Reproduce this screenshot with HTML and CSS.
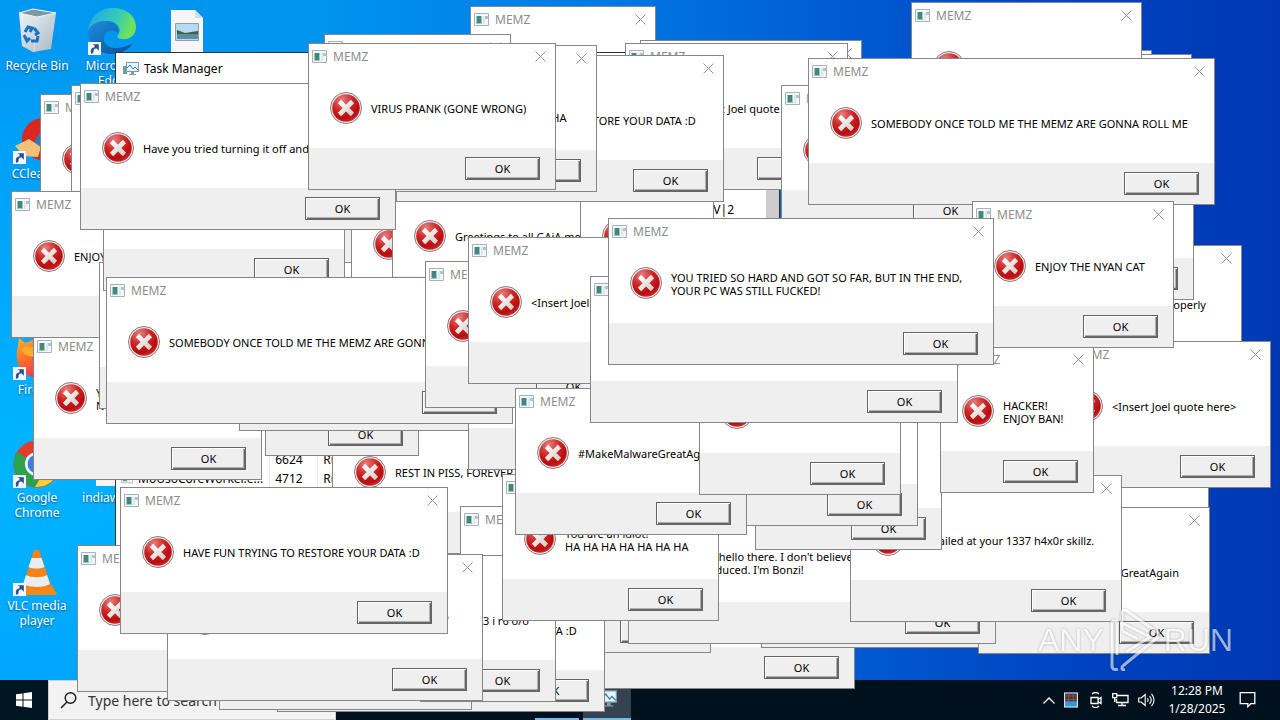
FILE: index.html
```html
<!DOCTYPE html>
<html lang="en">
<head>
<meta charset="utf-8">
<title>Desktop</title>
<link rel="stylesheet" href="styles.css">
</head>
<body>
<svg class="defs" aria-hidden="true">
  <defs>
    <radialGradient id="red" cx=".35" cy=".2" r=".9"><stop offset="0" stop-color="#e58080"/><stop offset=".45" stop-color="#cc2525"/><stop offset=".75" stop-color="#ba0c10"/><stop offset="1" stop-color="#d0383a"/></radialGradient>
    <linearGradient id="cross" x2="1" y2="1"><stop offset="0" stop-color="#fff"/><stop offset="1" stop-color="#d2cec6"/></linearGradient>
    <linearGradient id="bin" x2="1" y2="1"><stop offset="0" stop-color="#f1f7fa"/><stop offset="1" stop-color="#a9b8c0"/></linearGradient>
    <linearGradient id="edge1" x2="1" y2=".3"><stop offset="0" stop-color="#23a4e8"/><stop offset=".6" stop-color="#30c8c0"/><stop offset="1" stop-color="#6ee35a"/></linearGradient>
    <linearGradient id="edge2" x2="1" y2="1"><stop offset="0" stop-color="#1b8fdc"/><stop offset="1" stop-color="#0d4d98"/></linearGradient>
    <linearGradient id="fox" x2=".6" y2="1"><stop offset="0" stop-color="#ffb52b"/><stop offset=".5" stop-color="#ff6a2b"/><stop offset="1" stop-color="#e92a6a"/></linearGradient>
    <symbol id="error" viewBox="0 0 32 32"><circle cx="16" cy="16" r="15.5" fill="#f5eeee" stroke="#8d7676"/><circle cx="16" cy="16" r="13.8" fill="url(#red)"/><path d="M9.500 9.500l13 13M22.500 9.500l-13 13" stroke="url(#cross)" stroke-width="4.600"/></symbol>
    <symbol id="app" viewBox="0 0 15 13"><path d="M.5.5h14v12H.5z" fill="#f4f7f9" stroke="#a6b2ba"/><path d="M2 3h6v8H2z" fill="#9fc5c0"/><path d="M3 3h4v7H3z" fill="#43877c"/><path d="M9 3h2v8H9z" fill="#dfe7ea"/><path d="M11 3h3v3h-3z" fill="#b4c4cc"/></symbol>
    <symbol id="x" viewBox="0 0 12 12"><path d="M.5.5l11 11M11.5.5L.5 11.5" stroke="#8a8a8a" fill="none"/></symbol>
    <symbol id="arrow" viewBox="0 0 12 12"><path d="M0 0h12v12H0z" fill="#f4f6f8"/><path d="M3 11c-1-4 0-6 3-6V3L4 2h6v6L8 6C5 6 5 8 5 10z" fill="#2c4f93"/></symbol>
    <symbol id="taskmgr" viewBox="0 0 16 16"><path d="M0 5h4v8H0z" fill="#6ba58b"/><path d="M3.500 1.500h12v9h-12z" fill="#e5f4fb" stroke="#7d98a8"/><path d="M4 7l3-3 3 4 2-2 3 3" fill="none" stroke="#2882b8"/><path d="M8 11h3v2h2v1H6v-1h2z" fill="#8799a5"/></symbol>
  </defs>
</svg>
<main class="desktop">
  <ul class="icons">
    <li class="shortcut r1 c1"><svg class="glyph" viewBox="0 0 48 48"><path d="M6 5l14-4 23 4-5 36-18 3-11-6z" fill="url(#bin)"/><path d="M6 5l14-4 23 4-19 4z" fill="#7d97a3" stroke="#eef4f6"/><path d="M24 9l-3 35" stroke="#dbe5e9"/><path d="M12 24l3-5 4 1-2 4M21 20l4 5-3 2M11 27l3 6 3-3M18 33h6l1-5" fill="none" stroke="#1573c7" stroke-width="3"/></svg><span>Recycle Bin</span></li>
    <li class="shortcut r1 c2"><svg class="glyph" viewBox="0 0 48 48"><path d="M0 24C1 8 14-1 26 0c13 0 22 9 22 19 0 8-6 13-14 12-4 0-6-2-4-4 5-7-2-14-10-14C10 13 2 18 0 24z" fill="url(#edge1)"/><path d="M0 24c1-7 9-11 18-11 8 0 14 6 12 12-5-6-15-2-14 7 1 7 11 12 28 4C36 50 3 52 0 24z" fill="url(#edge2)"/><use href="#arrow" x="0" y="34" width="13" height="13"/></svg><span>Microsoft Edge</span></li>
    <li class="shortcut r1 c3" aria-label="Picture file"><svg class="glyph" viewBox="0 0 48 48"><path d="M8 2h24l8 8v36H8z" fill="#f6f6f6"/><path d="M32 2v8h8z" fill="#d5dde2"/><path d="M12.500 15.500h23v17h-23z" fill="#b6daf0" stroke="#8ba2b0"/><path d="M14 22l8 3 13-2v3H14z" fill="#35643d"/><path d="M14 26h21v5H14z" fill="#5d8ca5"/></svg></li>
    <li class="shortcut r2 c1"><svg class="glyph" viewBox="0 0 48 48"><circle cx="30" cy="23" r="21" fill="#d9281f"/><path d="M32 8l6 4-10 18-8-2z" fill="#2d7ac0"/><path d="M2 30l14-7 12 8-3 10-14-1z" fill="#f3c178"/><use href="#arrow" x="0" y="35" width="13" height="13"/></svg><span>CCleaner</span></li>
    <li class="shortcut r4 c1"><svg class="glyph" viewBox="0 0 48 48"><path d="M6 6l6 5 8-3c14-5 26 6 26 18S37 46 26 46C10 46 2 32 4 19z" fill="url(#fox)"/><circle cx="29" cy="24" r="10" fill="#6a46dd"/><path d="M8 16c10-4 14 2 18 2-4 2-6 4-6 7-6-1-10-3-12-9z" fill="#ffad2e"/><use href="#arrow" x="0" y="35" width="13" height="13"/></svg><span>Firefox</span></li>
    <li class="shortcut r5 c1"><svg class="glyph" viewBox="0 0 48 48"><circle cx="24" cy="24" r="23.500" fill="#e33b2e"/><path d="M24 24L4 12a23.500 23.500 0 0 0 18 35l10-17z" fill="#2ba24c"/><path d="M24 24l8 6-10 17a23.500 23.500 0 0 0 23-33H24z" fill="#fccf32"/><circle cx="24" cy="24" r="12" fill="#fff"/><circle cx="24" cy="24" r="9.500" fill="#3a7ee8"/><use href="#arrow" x="0" y="35" width="13" height="13"/></svg><span>Google Chrome</span></li>
    <li class="shortcut r5 c2"><svg class="glyph" viewBox="0 0 48 48"><path d="M8 2h32v44H8z" fill="#f4f4f4"/></svg><span>indiaworld</span></li>
    <li class="shortcut r6 c1"><svg class="glyph" viewBox="0 0 48 48"><path d="M10 37h29l5 10H3z" fill="#f58a13"/><path d="M21 2h5l12 36c-6 5-22 5-28 0z" fill="#f3821a"/><path d="M18.500 10h10l3 9c-4 2-12 2-16 0zM13 27c5 3 16 3 21 0l3 9c-6 4-20 4-27 0z" fill="#e9edf0"/><use href="#arrow" x="0" y="35" width="13" height="13"/></svg><span>VLC media player</span></li>
  </ul>
  <div class="layer" id="back"></div>
  <section class="window manager" aria-label="Task Manager">
    <header class="manager-bar"><svg class="manager-icon"><use href="#taskmgr"/></svg>Task Manager</header>
    <div class="manager-tools"><span>|V|2</span></div>
    <table class="processes">
      <tr><td class="name">msedge.exe</td><td class="pid">6624</td><td>Running</td></tr>
      <tr><td class="name"><svg class="process-icon"><use href="#app"/></svg>MoUsoCoreWorker.e...</td><td class="pid">4712</td><td>Running</td></tr>
    </table>
  </section>
  <footer class="taskbar">
    <button class="start" aria-label="Start"><svg viewBox="0 0 16 16"><path d="M0 2.300l6.500-.9v6.200H0zM7.500 1.200L16 0v7.600H7.500zM0 8.500h6.500v6.200L0 13.800zM7.500 8.500H16V16l-8.500-1.200z" fill="#fff"/></svg></button>
    <label class="search"><svg viewBox="0 0 17 17"><circle cx="10.500" cy="6" r="5.300" fill="none" stroke="#1a1a1a" stroke-width="1.400"/><path d="M7 10l-6 6" stroke="#1a1a1a" stroke-width="1.400"/></svg><input type="text" placeholder="Type here to search" aria-label="Type here to search"></label>
    <div class="apps"><button class="app" aria-label="MEMZ"></button><button class="app active" aria-label="Task Manager"><svg viewBox="0 0 16 16"><use href="#taskmgr"/></svg></button></div>
    <div class="tray">
      <svg class="chevron" viewBox="0 0 12 7"><path d="M.5 6.500L6 1l5.500 5.500" fill="none" stroke="#fff" stroke-width="1.300"/></svg>
      <svg class="cell" viewBox="0 0 12 13"><path d="M0 0h12v13H0z" fill="#d7e2e8"/><path d="M1 1h10v7H1z" fill="#4a3338"/><path d="M1 8h10v4H1z" fill="#2e9bdc"/><path d="M1 3h10M1 6h10M4 1v7M8 1v7" stroke="#826a65" stroke-width=".6"/></svg>
      <svg class="meet" viewBox="0 0 12 16"><path d="M1 5.500h7v6H1zM8 7.500l3-2v6l-3-2M2 2c2-2 5-2 7 0M2 14c2 2 5 2 7 0" fill="none" stroke="#fff" stroke-width="1.300"/></svg>
      <svg class="net" viewBox="0 0 17 14"><path d="M5 2.500h11v7H4.500V6M.7.7h4v4h-4zM2.700 5v4M6 12.500h8M10 10v2" fill="none" stroke="#fff" stroke-width="1.300"/></svg>
      <svg class="net" viewBox="0 0 17 14"><path d="M.7 5v4h2.500l4 3.500v-11l-4 3.500zM9.500 5c1 1.500 1 2.500 0 4M11.500 3c2.200 2.500 2.200 5.500 0 8M13.500 1c3.400 3.500 3.400 8.500 0 12" fill="none" stroke="#fff" stroke-width="1.100"/></svg>
      <time class="clock">12:28 PM<br>1/28/2025</time>
      <svg class="note" viewBox="0 0 16 16"><path d="M.7.700h14.600v11h-4l-3 3v-3H.7z" fill="none" stroke="#fff" stroke-width="1.300"/></svg>
    </div>
  </footer>
  <div class="layer" id="front"></div>
  <div class="watermark"><span>ANY</span><svg viewBox="0 0 52 62"><path d="M4 12v45c0 4 4 4 6 3M4 12h5v34M14 3v19M14 3c0-2 3-3 5-1l30 21c3 2 3 4 0 6L16 56c-3 2-3 5 1 5M14 14l28 14-24 15M14 22l16 8" fill="none" stroke="#fff" stroke-width="3"/></svg><span>RUN</span></div>
</main>
<script src="script.js"></script>
</body>
</html>
```
FILE: styles.css
```css
* { box-sizing: border-box; }
body { margin: 0; font-family: "Noto Sans", "Open Sans", sans-serif; font-size: 11px; color: #000; }
button, input { font: inherit; color: inherit; }
.defs { position: absolute; width: 0; height: 0; }
.desktop {
  position: relative; min-height: 100vh; overflow: hidden;
  display: flex; flex-direction: column; justify-content: space-between;
  background:
    radial-gradient(ellipse 900px 620px at 0 65%, #00b5ff 0, #00aaff 25%, rgba(0, 150, 245, 0) 70%),
    linear-gradient(90deg, #0099f2 0, #0094ee 25%, #007ce4 45%, #0058d0 68%, #0042bf 85%, #0038b4 100%);
}
.layer { display: contents; }
.icons { list-style: none; margin: 0; padding: 0; display: grid; grid-template-columns: 74px 76px 74px; grid-template-rows: repeat(5, 108px) 96px; }
.shortcut { display: flex; flex-direction: column; align-items: center; padding-top: 8px; color: #fff; font-size: 12px; line-height: 15px; text-align: center; text-shadow: 0 1px 2px rgba(0, 0, 0, .55); }
.shortcut span { width: 72px; margin-top: 2px; }
.glyph { width: 48px; height: 48px; }
.r1 { grid-row: 1; } .r2 { grid-row: 2; } .r4 { grid-row: 4; } .r5 { grid-row: 5; } .r6 { grid-row: 6; }
.c1 { grid-column: 1; } .c2 { grid-column: 2; } .c3 { grid-column: 3; }

.window { position: absolute; background: #fff; border: 1px solid #868686; }
.title { display: flex; align-items: center; height: 24px; padding: 0 9px 0 3px; font-size: 12px; color: #8c8c8c; }
.title svg { width: 15px; height: 13px; margin-right: 6px; }
.close { display: flex; margin-left: auto; padding: 0; border: 0; background: none; }
.close svg { width: 11px; height: 11px; margin: 0; }
.body { display: flex; align-items: center; gap: 9px; height: 80px; padding-left: 21px; overflow: hidden; }
.body svg { flex: none; width: 32px; height: 32px; }
.body p { margin: 0; padding-top: 1px; white-space: pre; line-height: 13px; }
.actions { display: flex; justify-content: flex-end; padding: 9px 15px; background: #efefef; }
.ok { width: 75px; height: 23px; padding: 0; line-height: 13px; background: #efefef; border: 1px solid #646464; box-shadow: inset 1px 1px #fff, inset -1px -1px #696969, inset -2px -2px #b0b0b0; }

.manager { left: 115px; top: 52px; width: 665px; height: 510px; border-color: #333; }
.manager-bar { display: flex; align-items: center; gap: 5px; height: 31px; padding-left: 7px; font-size: 12px; }
.manager-icon { width: 16px; height: 16px; }
.manager-tools { display: flex; justify-content: flex-end; align-items: flex-end; height: 134px; padding-right: 32px; border-right: 13px solid #cdcdcd; font-size: 12px; }
.processes { margin-top: 232px; border-collapse: collapse; font-size: 12px; }
.processes td { height: 19px; padding: 0 6px 0 5px; line-height: 16px; border-right: 1px solid #e6e6e6; }
.processes .name { width: 146px; padding-left: 22px; position: relative; }
.processes .pid { width: 48px; }
.process-icon { position: absolute; left: 5px; top: 3px; width: 12px; height: 12px; }

.taskbar { display: flex; height: 40px; background: #00101c; position: relative; }
.start { width: 48px; border: 0; padding: 12px 16px; background: #001620; }
.start svg { display: block; width: 16px; height: 16px; }
.search { display: flex; align-items: center; gap: 11px; width: 288px; padding-left: 11px; background: #f2f2f2; border: 1px solid #cfcfcf; }
.search svg { width: 17px; height: 17px; }
.search input { width: 220px; border: 0; padding: 0; background: none; font-size: 14px; }
.search input::placeholder { color: #333; opacity: 1; }
.apps { display: flex; gap: 4px; padding-left: 199px; }
.app { width: 44px; border: 0; border-bottom: 2px solid #76b9ed; background: none; padding: 0; }
.active { width: 48px; background: #34434f; }
.app svg { width: 20px; height: 20px; display: block; margin: auto; }
.tray { display: flex; align-items: center; gap: 9px; margin-left: auto; padding-right: 24px; color: #fff; }
.tray svg { width: 17px; height: 16px; }
.tray .chevron { width: 12px; height: 7px; }
.tray .cell, .tray .meet { width: 14px; }
.tray .cell { margin-right: 2px; }
.clock { width: 66px; font-size: 12px; line-height: 18px; text-align: center; }

.watermark { position: absolute; left: 1038px; top: 609px; display: flex; align-items: center; color: #fff; opacity: .6; font: 32px "Liberation Sans Narrow", "Liberation Sans", sans-serif; filter: drop-shadow(0 0 1px rgba(0, 0, 0, .45)); }
.watermark svg { width: 52px; height: 62px; margin: 0 4px; }
```
FILE: script.js
```js
const ROLL = "SOMEBODY ONCE TOLD ME THE MEMZ ARE GONNA ROLL ME";
const TURN = "Have you tried turning it off and on again?";
const DATA = "HAVE FUN TRYING TO RESTORE YOUR DATA :D";
const JOEL = "<Insert Joel quote here>";
const NYAN = "ENJOY THE NYAN CAT";
const BONZI = "Well, hello there. I don't believe we've been properly\nintroduced. I'm Bonzi!";
const IDIOT = "You are an idiot!\nHA HA HA HA HA HA HA";
const GREAT = "#MakeMalwareGreatAgain";
const BAN = "HACKER!\nENJOY BAN!";
const PRANK = "VIRUS PRANK (GONE WRONG)";

// Each entry is [left, top, width, message], ordered from bottom to top.
const back = [
  [470, 6, 186, ""],
  [640, 40, 222, ""]
];
const front = [
  [324, 34, 187, ""],
  [625, 43, 223, JOEL],
  [40, 94, 202, ""],
  [71, 85, 202, ""],
  [33, 333, 229, "YOU\nNOW"],
  [11, 191, 203, NYAN],
  [150, 116, 300, ""],
  [351, 179, 200, ""],
  [392, 171, 240, "Greetings to all GAiA members"],
  [580, 171, 134, ""],
  [99, 262, 200, ""],
  [103, 144, 242, ""],
  [396, 55, 328, DATA],
  [380, 45, 217, IDIOT],
  [80, 83, 316, TURN],
  [308, 43, 248, PRANK],
  [950, 50, 202, ""],
  [960, 54, 232, ""],
  [911, 2, 231, ""],
  [874, 245, 368, BONZI],
  [992, 153, 202, ""],
  [781, 85, 223, ""],
  [808, 58, 407, ROLL],
  [1007, 440, 202, ""],
  [1049, 341, 222, JOEL],
  [332, 407, 240, "REST IN PISS, FOREVER MISS."],
  [265, 309, 154, ""],
  [239, 284, 250, ""],
  [468, 323, 200, ""],
  [106, 277, 407, ROLL],
  [425, 261, 202, ""],
  [468, 237, 222, JOEL],
  [540, 542, 315, ""],
  [761, 501, 222, ""],
  [978, 507, 232, GREAT],
  [460, 506, 251, ""],
  [628, 497, 368, BONZI],
  [277, 565, 328, DATA],
  [219, 563, 253, ""],
  [420, 555, 136, "3 i r6 o/o"],
  [850, 475, 272, "You failed at your 1337 h4x0r skillz."],
  [755, 403, 187, ""],
  [502, 474, 217, IDIOT],
  [696, 379, 222, ""],
  [515, 388, 232, GREAT],
  [699, 348, 202, ""],
  [940, 346, 154, BAN],
  [590, 276, 368, ""],
  [972, 201, 202, NYAN],
  [608, 218, 386, "YOU TRIED SO HARD AND GOT SO FAR, BUT IN THE END,\nYOUR PC WAS STILL FUCKED!"],
  [77, 545, 222, ""],
  [167, 554, 316, TURN],
  [120, 487, 328, DATA]
];

function box([left, top, width, message]) {
  const win = document.createElement("section");
  win.className = "window";
  win.style.left = left + "px";
  win.style.top = top + "px";
  win.style.width = width + "px";
  win.innerHTML =
    '<header class="title"><svg><use href="#app"/></svg>MEMZ' +
    '<button class="close" aria-label="Close"><svg><use href="#x"/></svg></button></header>' +
    '<div class="body"><svg><use href="#error"/></svg><p></p></div>' +
    '<footer class="actions"><button class="ok">OK</button></footer>';
  win.querySelector("p").textContent = message;
  return win;
}

document.getElementById("back").append(...back.map(box));
document.getElementById("front").append(...front.map(box));
```
